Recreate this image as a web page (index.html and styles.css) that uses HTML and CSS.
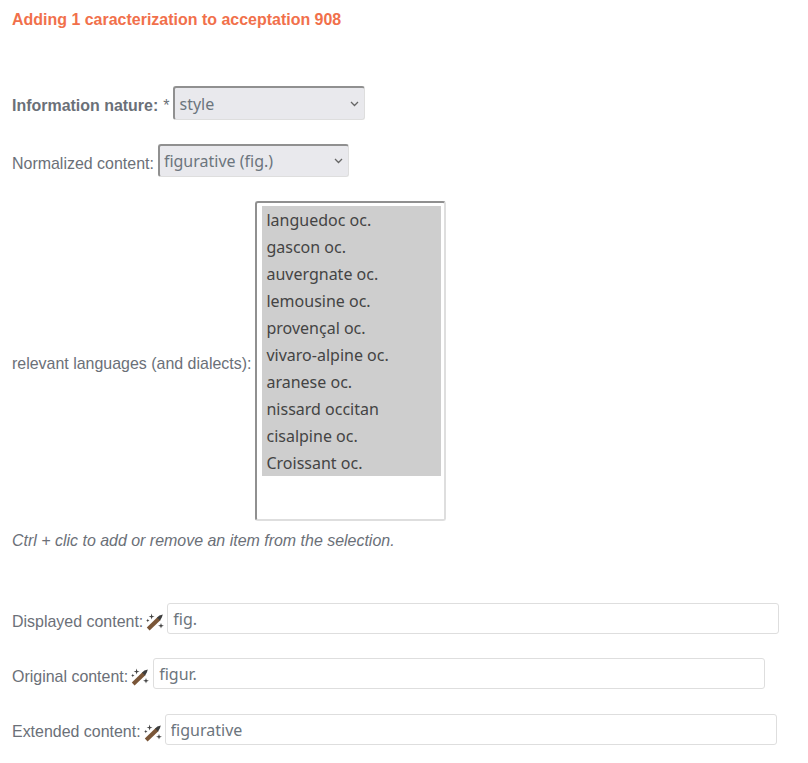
FILE: index.html
```html
<!DOCTYPE html>
<html lang="en">
<head>
<meta charset="utf-8">
<title>Adding caracterization</title>
<link rel="stylesheet" href="styles.css">
</head>
<body>
<h4 class="title">Adding 1 caracterization to acceptation 908</h4>
<form class="form">
  <div class="row row-nature">
    <label class="label label-strong" for="nature">Information nature:</label>
    <span class="label required">*</span>
    <select id="nature" class="field select select-nature"><option>style</option></select>
  </div>
  <div class="row row-normalized">
    <label class="label" for="norm">Normalized content:</label>
    <select id="norm" class="field select select-norm"><option>figurative (fig.)</option></select>
  </div>
  <div class="row row-langs">
    <label class="label" for="langs">relevant languages (and dialects):</label>
    <select id="langs" class="field multi" multiple size="11">
      <option selected>languedoc oc.</option>
      <option selected>gascon oc.</option>
      <option selected>auvergnate oc.</option>
      <option selected>lemousine oc.</option>
      <option selected>provençal oc.</option>
      <option selected>vivaro-alpine oc.</option>
      <option selected>aranese oc.</option>
      <option selected>nissard occitan</option>
      <option selected>cisalpine oc.</option>
      <option selected>Croissant oc.</option>
    </select>
  </div>
  <p class="hint">Ctrl + clic to add or remove an item from the selection.</p>
  <div class="row row-displayed">
    <label class="label" for="displayed">Displayed content:</label>
    <svg class="wand" viewBox="0 0 18 18" aria-hidden="true"><use href="#wand-icon"></use></svg>
    <input id="displayed" class="field text" value="fig.">
  </div>
  <div class="row row-original">
    <label class="label" for="original">Original content:</label>
    <svg class="wand" viewBox="0 0 18 18" aria-hidden="true"><use href="#wand-icon"></use></svg>
    <input id="original" class="field text" value="figur.">
  </div>
  <div class="row row-extended">
    <label class="label" for="extended">Extended content:</label>
    <svg class="wand" viewBox="0 0 18 18" aria-hidden="true"><use href="#wand-icon"></use></svg>
    <input id="extended" class="field text" value="figurative">
  </div>
</form>
<svg class="defs" aria-hidden="true">
  <defs>
    <g id="wand-icon">
      <path d="M0.8 14.6 L11.6 4 L14.6 7 L3.6 17.4 Z" fill="#7a5638"/>
      <path d="M11 4.6 L13.4 2.6 L16.8 1.4 L15.8 4.6 L14 7.6 Z" fill="#3d3d3d"/>
      <path d="M5.6 0.6 L6.3 2.9 L8.6 3.6 L6.3 4.3 L5.6 6.6 L4.9 4.3 L2.6 3.6 L4.9 2.9 Z" fill="#444"/>
      <path d="M15 10 L15.7 12.1 L17.9 12.8 L15.7 13.5 L15 15.6 L14.3 13.5 L12.1 12.8 L14.3 12.1 Z" fill="#444"/>
      <path d="M1.8 5.8 L2.3 7 L3.5 7.5 L2.3 8 L1.8 9.2 L1.3 8 L0.1 7.5 L1.3 7 Z" fill="#444"/>
    </g>
  </defs>
</svg>
</body>
</html>
```
FILE: styles.css
```css
html, body {
  margin: 0;
  padding: 0;
  background: #fff;
}
body {
  padding: 11px 12px 0;
  font-family: "Liberation Sans", Arial, sans-serif;
  font-size: 15.96px;
  color: #6b7078;
  overflow: hidden;
}
.title {
  margin: 0;
  font-size: 15.98px;
  line-height: 18px;
  font-weight: bold;
  color: #f1704b;
}
.form {
  display: flex;
  flex-direction: column;
}
.row {
  display: flex;
  align-items: center;
}
.row-nature { margin-top: 57px; }
.row-normalized { margin-top: 24px; }
.row-langs { margin-top: 24px; }
.row-displayed { margin-top: 52px; }
.row-original { margin-top: 24px; }
.row-extended { margin-top: 25px; }
.label {
  padding-top: 6px;
  white-space: nowrap;
}
.row-extended .label { padding-top: 4px; }
.label-strong { font-weight: bold; }
.required { margin-left: 5px; }
.field {
  font-family: "Noto Sans", sans-serif;
  font-size: 16px;
  color: #6c757d;
  box-sizing: border-box;
  margin: 0 0 0 4px;
  border-radius: 3px;
}
.select {
  appearance: none;
  width: 191px;
  height: 34px;
  padding: 0 4px;
  background-color: #e9e9ed;
  background-image: url("data:image/svg+xml,%3Csvg xmlns='http://www.w3.org/2000/svg' width='9' height='6'%3E%3Cpath d='M1 1l3.5 3.5L8 1' fill='none' stroke='%23666' stroke-width='1.3'/%3E%3C/svg%3E");
  background-repeat: no-repeat;
  background-position: right 5px center;
  border-style: solid;
  border-width: 2px 1px 1px 2px;
  border-color: #909090 #dedede #dedede #909090;
}
.select-nature { width: 192px; }
.select-norm { height: 33px; }
.multi {
  width: 191px;
  height: 320px;
  padding: 3px 3px 3px 5px;
  color: #444;
  background: #fff;
  border-style: solid;
  border-width: 2px;
  border-color: #909090 #dedede #dedede #909090;
  overflow: hidden;
}
.multi option {
  height: 27px;
  padding: 3px 4px 2px;
  box-sizing: border-box;
}
.multi option:checked {
  color: #444;
  background: #cecece;
}
.hint {
  margin: 10px 0 0;
  font-style: italic;
  line-height: 20px;
}
.wand {
  width: 18px;
  height: 18px;
  margin: 6px 0 0 3px;
  flex: none;
}
.text {
  width: 612px;
  height: 31px;
  margin-left: 3px;
  padding: 1px 5px 0;
  background: #fff;
  border: 1px solid #dedede;
}
.row-original .text { margin-left: 4px; }
.defs {
  position: absolute;
  width: 0;
  height: 0;
}
```
